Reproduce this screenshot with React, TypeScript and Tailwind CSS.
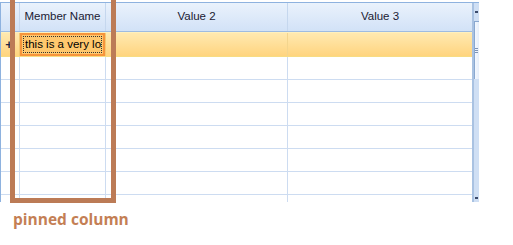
import React from 'react';

const rows = [0, 1, 2, 3, 4, 5];

const App: React.FC = () => {
    return (
        <div className="relative w-[513px] h-[245px] bg-white overflow-hidden" style={{fontFamily: '"Liberation Sans", Arial, sans-serif'}}>
            <div className="pt-[2px]">
                <div className="w-[479px] h-[200px] border-t border-l border-[#8eb2df] flex overflow-hidden">
                    {/* grid body */}
                    <div className="flex-1 flex flex-col">
                        {/* header */}
                        <div className="flex h-[29px] shrink-0 border-b border-[#9ebbe0] bg-gradient-to-b from-[#eaf2fc] to-[#d2e2f7] text-[11.5px] text-[#1a1a33]">
                            <div className="w-[19px] border-r border-[#c5d7ee]"/>
                            <div className="w-[86px] border-r border-[#c5d7ee] flex items-center justify-center pb-[1px]">Member Name</div>
                            <div className="w-[182px] border-r border-[#c5d7ee] flex items-center justify-center pb-[1px]">Value 2</div>
                            <div className="flex-1 flex items-center justify-center pb-[1px]">Value 3</div>
                        </div>

                        {/* selected row */}
                        <div className="flex h-[25px] shrink-0 border-t border-[#fff0bd] border-b border-b-[#f7dc83] bg-gradient-to-b from-[#ffe9b0] to-[#ffd47e]">
                            <div className="w-[19px] border-r border-[#f3c873] flex items-center justify-center">
                                <span className="text-[#1f2a44] text-[13px] leading-none font-bold ml-[-2px]">+</span>
                            </div>
                            <div className="w-[86px] border-r border-[#f3c873]">
                                <div className="h-full border-2 border-[#f7953c] bg-[#ffc86e] p-[1px]">
                                    <div className="h-full border border-dotted border-[#333] flex items-center overflow-hidden whitespace-nowrap text-[11.5px] text-black pl-[1px]">
                                        this is a very lon
                                    </div>
                                </div>
                            </div>
                            <div className="w-[182px] border-r border-[#f3d58e]"/>
                            <div className="flex-1"/>
                        </div>

                        {rows.map(r => (
                            <div key={r} className="flex h-[23px] shrink-0 border-b border-[#cddcf1]">
                                <div className="w-[19px] border-r border-[#cddcf1]"/>
                                <div className="w-[86px] border-r border-[#cddcf1]"/>
                                <div className="w-[182px] border-r border-[#cddcf1]"/>
                                <div className="flex-1"/>
                            </div>
                        ))}
                        <div className="flex flex-1">
                            <div className="w-[19px] border-r border-[#cddcf1]"/>
                            <div className="w-[86px] border-r border-[#cddcf1]"/>
                            <div className="w-[182px] border-r border-[#cddcf1]"/>
                            <div className="flex-1"/>
                        </div>
                    </div>

                    {/* scrollbar */}
                    <div className="w-[7px] border-l-2 border-[#a9c2e2] bg-[#cfdff4] flex flex-col">
                        <div className="h-[18px] flex items-center justify-end pr-[1px]">
                            <div className="w-[3px] h-[2px] bg-[#3b4a6b]"/>
                        </div>
                        <div className="h-[58px] bg-gradient-to-r from-[#f4f8fe] to-[#e5eefb] border-t border-l border-[#8aa8d0] flex flex-col items-end justify-center gap-[1px] pr-[1px]">
                            <div className="w-[3px] h-px bg-[#7d93b6]"/>
                            <div className="w-[3px] h-px bg-[#7d93b6]"/>
                            <div className="w-[3px] h-px bg-[#7d93b6]"/>
                        </div>
                        <div className="flex-1 flex items-end justify-end pr-[1px] pb-[3px]">
                            <div className="w-[3px] h-[2px] bg-[#3b4a6b]"/>
                        </div>
                    </div>
                </div>
            </div>

            {/* pinned column highlight */}
            <div className="absolute left-[10px] top-[-6px] w-[106px] h-[209px] border-[5px] border-[#bc7b56]"/>

            <div className="absolute left-[13px] top-[208px] text-[15.5px] font-bold text-[#c47f55]" style={{fontFamily: '"Open Sans", sans-serif'}}>
                pinned column
            </div>
        </div>
    );
};

export default App;
